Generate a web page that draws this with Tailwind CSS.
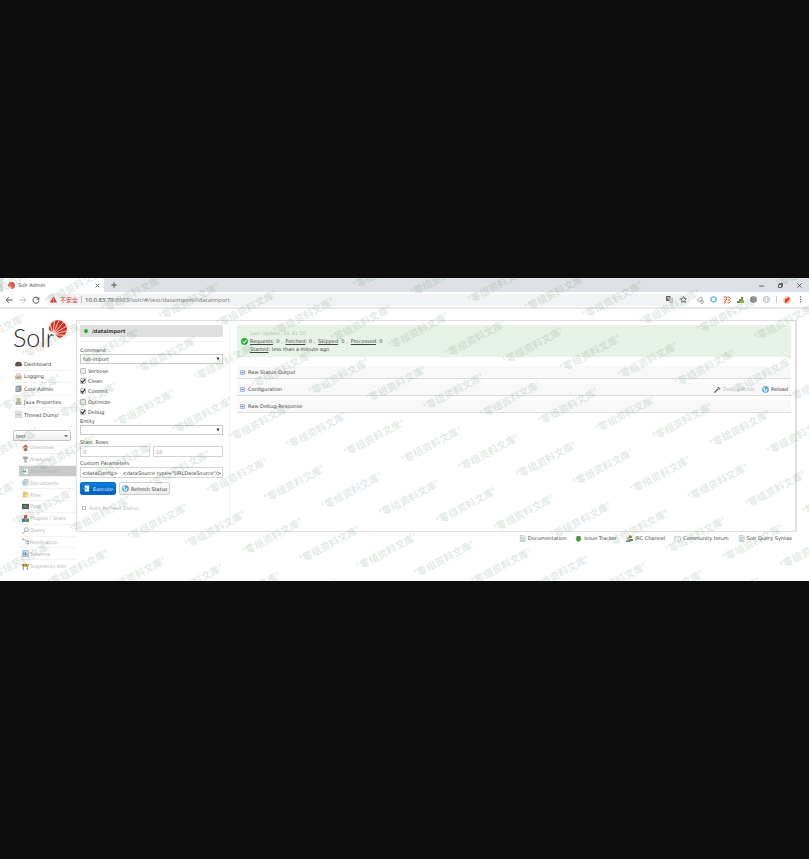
<!DOCTYPE html>
<html lang="en">
<head>
<meta charset="utf-8">
<title>Solr Admin</title>
<script src="https://cdn.jsdelivr.net/npm/@tailwindcss/browser@4"></script>
</head>
<body class="flex min-h-screen flex-col justify-center bg-[#0d0d0d]">
<svg class="hidden">
  <symbol id="sun" viewBox="0 0 18 18"><path d="M5 13.500L0 10A9.300 9.300 0 0 1 9 0A9 9 0 0 1 18 9A9.300 9.300 0 0 1 10 18z" fill="#d9301e"/><path d="M4 14.500L1 4M4 14.500L5.500 0M4 14.500L10.500 -1M4 14.500L15.500 1M4 14.500L18.500 5.500M4 14.500L19 10.500M4 14.500L17 15.500" stroke="#fff" stroke-width=".8"/></symbol>
  <symbol id="check" viewBox="0 0 8 8"><path d="M1.500 4L3.300 6L6.800 1.500" fill="none" stroke="#333" stroke-width="1.600"/></symbol>
  <symbol id="doc" viewBox="0 0 8 8"><path d="M1.500 .5h4l1.500 1.500v5.500h-5.500z" fill="#e9f0f2" stroke="#9fb4ba" stroke-width=".7"/><path d="M2.500 3h3M2.500 4.500h3M2.500 6h3" stroke="#8fb3b9" stroke-width=".6"/></symbol>
  <symbol id="reload" viewBox="0 0 8 8"><circle cx="4" cy="4" r="3.800" fill="#4a9fdc"/><path d="M2.500 2.500v2a1.500 1.500 0 0 0 3 0V3" fill="none" stroke="#fff" stroke-width="1.200"/><path d="M1 3.200L2.500 1 4 3.200z" fill="#fff"/></symbol>
  <symbol id="toggle" viewBox="0 0 6 6"><rect x=".5" y=".5" width="5" height="5" rx=".8" fill="#dfe6fb" stroke="#8796d8" stroke-width=".8"/><path d="M1.500 3h3" stroke="#4a5fc0" stroke-width=".9"/></symbol>
</svg>
<div class="relative overflow-hidden bg-white font-['DejaVu_Sans',sans-serif] text-[5px] leading-[8px] text-[#444]">

  <!-- Browser chrome -->
  <header class="border-b-2 border-[#e8e8e8] bg-white">
    <div class="flex h-[14px] items-end justify-between bg-[#dee1e6] pl-[3px]">
      <div class="flex items-end">
        <div class="flex h-[14px] w-[101px] items-center rounded-t-[3px] bg-white pl-[5px] pr-[4px]">
          <svg class="mr-[3px] size-[7px]"><use href="#sun"/></svg>
          <span>Solr Admin</span>
          <button class="ml-auto" aria-label="Close tab"><svg class="size-[5px]" viewBox="0 0 5 5"><path d="M.7.7l3.600 3.600M4.300.7L.7 4.300" stroke="#555" stroke-width=".9"/></svg></button>
        </div>
        <button class="mb-[4px] ml-[7px]" aria-label="New tab"><svg class="size-[6px]" viewBox="0 0 6 6"><path d="M3 .3v5.400M.3 3h5.400" stroke="#555" stroke-width="1"/></svg></button>
      </div>
      <div class="flex h-[13px] items-center gap-[14px] pr-[7px]">
        <button aria-label="Minimize"><svg class="size-[5px]" viewBox="0 0 5 5"><path d="M0 3h5" stroke="#444" stroke-width=".8"/></svg></button>
        <button aria-label="Restore"><svg class="size-[5px]" viewBox="0 0 5 5"><path d="M.5 1.500h3v3h-3zM1.500 1.500v-1h3v3h-1" fill="none" stroke="#444" stroke-width=".8"/></svg></button>
        <button aria-label="Close window"><svg class="size-[5px]" viewBox="0 0 5 5"><path d="M.4.4l4.200 4.200M4.600.4L.4 4.600" stroke="#444" stroke-width=".8"/></svg></button>
      </div>
    </div>
    <div class="flex h-[15px] items-center pl-[5px] pr-[7px]">
      <button class="mr-[6px]" aria-label="Back"><svg class="size-[8px]" viewBox="0 0 8 8"><path d="M7.500 4H1.500M4 1.200L1.200 4L4 6.800" fill="none" stroke="#555" stroke-width="1"/></svg></button>
      <button class="mr-[5px]" aria-label="Forward"><svg class="size-[8px]" viewBox="0 0 8 8"><path d="M.5 4h6M4 1.200L6.800 4L4 6.800" fill="none" stroke="#bbb" stroke-width="1"/></svg></button>
      <button class="mr-[6px]" aria-label="Reload page"><svg class="size-[8px]" viewBox="0 0 8 8"><path d="M6.500 2.500A3 3 0 1 0 7 4.600" fill="none" stroke="#555" stroke-width="1"/><path d="M7.300.7v3h-3z" fill="#555"/></svg></button>
      <div class="flex h-[12px] grow items-center rounded-full bg-[#f1f3f4] pl-[4px] pr-[3px] font-['Open_Sans','Noto_Sans_CJK_SC',sans-serif] text-[6px]">
        <svg class="mr-[3px] size-[7px]" viewBox="0 0 7 7"><path d="M3.500.5L7 6.500H0z" fill="#d93025"/><path d="M3.500 2.700v1.900M3.500 5.100v.8" stroke="#fff" stroke-width=".7"/></svg>
        <span class="text-[#d93025]">不安全</span>
        <span class="mx-[3px] h-[7px] w-px bg-[#bbb]"></span>
        <span class="grow text-[#777]"><span class="text-[#333]">10.0.83.79</span>:8983/solr/#/test/dataimport//dataimport</span>
        <div class="flex items-center gap-[7px]">
          <svg class="size-[7px]" viewBox="0 0 7 7"><rect width="4.500" height="5" fill="#666"/><path d="M3 2h4v5H4z" fill="#bbb"/><path d="M1.200 1.500h2M2.200 1.500v2M4.500 3.500l1.500 2.500" stroke="#fff" stroke-width=".6"/></svg>
          <svg class="size-[7px]" viewBox="0 0 7 7"><path d="M3.500.5l.9 2 2.200.2-1.700 1.500.5 2.200-1.900-1.100-1.900 1.100.5-2.200L.4 2.700l2.200-.2z" fill="none" stroke="#555" stroke-width=".8"/></svg>
        </div>
      </div>
      <div class="ml-[6px] flex items-center gap-[6px]">
        <svg class="size-[8px]" viewBox="0 0 8 8"><path d="M1 3.500L4 1.300 6.500 2v2L3 6z" fill="#eee" stroke="#aaa" stroke-width=".8"/><circle cx="6" cy="6" r="1.500" fill="#fff" stroke="#888" stroke-width=".7"/></svg>
        <svg class="size-[7px]" viewBox="0 0 7 7"><circle cx="3.500" cy="3.500" r="2.600" fill="none" stroke="#67b5ee" stroke-width="1.400"/></svg>
        <svg class="size-[8px]" viewBox="0 0 8 8"><path d="M.5 1h3v2.500L2 5v2H.5M2.500 3.500H1M4.500 1H6l1.300 1.200L6 3.800l1.500 1.500L6 7H4.500M4.500 3.800H6" fill="none" stroke="#e8622c" stroke-width="1"/></svg>
        <svg class="size-[7px]" viewBox="0 0 7 7"><path d="M0 7V5h2V3h2V1h2v6z" fill="#77827b"/><path d="M3 5l4-1v3H3z" fill="#8bbd2f"/></svg>
        <svg class="size-[7px]" viewBox="0 0 7 7"><circle cx="3.500" cy="3.500" r="3.300" fill="#777"/><path d="M1 3h5M1.500 5h4M2 1.500h3" stroke="#ccc" stroke-width=".6"/></svg>
        <svg class="size-[7px]" viewBox="0 0 7 7"><circle cx="3.500" cy="3.500" r="3" fill="#fff" stroke="#999" stroke-width=".8"/><path d="M2.700 2L2 3.500 2.700 5M4.300 2L5 3.500 4.300 5" fill="none" stroke="#999" stroke-width=".6"/></svg>
        <span class="h-[7px] w-px bg-[#ccc]"></span>
        <svg class="size-[8px]" viewBox="0 0 8 8"><circle cx="4" cy="4" r="4" fill="#f6d5c8"/><path d="M1.500 6.800L2.300 3 6.200 1l.5 2L4 6.500z" fill="#e2401b"/></svg>
        <svg class="ml-[2px] h-[7px] w-[3px]" viewBox="0 0 3 7"><g fill="#666"><circle cx="1.500" cy="1" r=".7"/><circle cx="1.500" cy="3.500" r=".7"/><circle cx="1.500" cy="6" r=".7"/></g></svg>
      </div>
    </div>
  </header>

  <div class="flex pb-[8px] pl-[13px] pr-[12px] pt-[11px]">
    <!-- Navigation -->
    <nav class="w-[63px] shrink-0">
      <a href="#" class="relative block h-[38px] pt-[2px] font-['Lato',sans-serif] text-[25px] font-light leading-[30px] text-[#2a2530]">Solr<svg class="absolute left-[36px] top-0 size-[18px]"><use href="#sun"/></svg></a>
      <ul class="grid h-[63px] grid-rows-5 divide-y divide-[#f2f2f2]">
        <li class="flex items-center"><a href="#" class="flex items-center gap-[2px] pl-[2px]"><svg class="size-[7px]" viewBox="0 0 8 8"><path d="M0 6a4 4 0 0 1 8 0l-1 1H1z" fill="#5b4a4a"/><path d="M4 6l2-2.500" stroke="#e55" stroke-width=".8"/></svg>Dashboard</a></li>
        <li class="flex items-center"><a href="#" class="flex items-center gap-[2px] pl-[2px]"><svg class="size-[7px]" viewBox="0 0 8 8"><path d="M1 3l1-2.500h4L7 3z" fill="#dceaf6" stroke="#8fb0cc" stroke-width=".5"/><path d="M0 3h8v4.500H0z" fill="#efbd7c"/><path d="M1.500 4.500h5v1.500h-5z" fill="#7aa6cf"/></svg>Logging</a></li>
        <li class="flex items-center"><a href="#" class="flex items-center gap-[2px] pl-[2px]"><svg class="size-[7px]" viewBox="0 0 8 8"><path d="M2.500.5h5v6l-2 1.500h-5V2z" fill="#8d979f"/><path d="M1.500 3h3M1.500 4.500h3M1.500 6h3" stroke="#e8eef2" stroke-width=".6"/></svg>Core Admin</a></li>
        <li class="flex items-center"><a href="#" class="flex items-center gap-[2px] pl-[2px]"><svg class="size-[7px]" viewBox="0 0 8 8"><path d="M1.500 0h5v8h-5z" fill="#c8d5d3"/><circle cx="4" cy="2" r="1.400" fill="#ddb565"/><path d="M1 4.500h6v3H1z" fill="#9aa989"/><path d="M2 6h4" stroke="#fff" stroke-width=".7"/></svg>Java Properties</a></li>
        <li class="flex items-center"><a href="#" class="flex items-center gap-[2px] pl-[2px]"><svg class="size-[7px]" viewBox="0 0 8 8"><path d="M.5.5h7v7h-7z" fill="#f3f3f3" stroke="#bbb" stroke-width=".7"/><path d="M1.500 2.500h5M1.500 4h5M1.500 5.500h5" stroke="#999" stroke-width=".6"/></svg>Thread Dump</a></li>
      </ul>
      <div class="relative mr-[5px] mt-[9px]">
        <select aria-label="Core" class="block h-[11px] w-full appearance-none rounded-[2px] border border-[#c4c4c4] bg-linear-to-b from-white to-[#eee] px-[2px] leading-[8px]"><option>test</option></select>
        <svg class="pointer-events-none absolute right-[3px] top-[4px] size-[4px]" viewBox="0 0 4 4"><path d="M0 1h4L2 3.500z" fill="#777"/></svg>
      </div>
      <ul class="mb-px ml-[6px] mt-px grid h-[130px] grid-rows-11 divide-y divide-[#f2f2f2] text-[#b4b4b4]">
        <li class="flex items-center pl-[3px]"><a href="#" class="flex items-center gap-px"><svg class="size-[7px]" viewBox="0 0 8 8"><path d="M0 4l4-3.500L8 4z" fill="#b9644a"/><path d="M1.500 4h5v4h-5z" fill="#d5b49a"/><path d="M3 5h2v3H3z" fill="#7a4a3a"/></svg>Overview</a></li>
        <li class="flex items-center pl-[3px]"><a href="#" class="flex items-center gap-px"><svg class="size-[7px]" viewBox="0 0 8 8"><path d="M1 .5h6v2L5 4.500V6.500h1v1H2v-1h1V4.500L1 2.500z" fill="#a5a9ad"/></svg>Analysis</a></li>
        <li class="flex items-center bg-[#c9c9c9] pl-[3px]"><a href="#" class="flex items-center gap-px"><svg class="size-[7px]" viewBox="0 0 8 8"><path d="M2 .5h5v7H2z" fill="#f6fafa" stroke="#9db0b0" stroke-width=".5"/><path d="M.5 4h4M3 2.500L4.700 4 3 5.500" fill="none" stroke="#45a06a" stroke-width="1"/></svg>Dataimport</a></li>
        <li class="flex items-center pl-[3px]"><a href="#" class="flex items-center gap-px"><svg class="size-[7px]" viewBox="0 0 8 8"><path d="M.5 2h4.500v5.500H.5z" fill="#b4cbd0"/><path d="M2.500.5h4.500v6H2.500z" fill="#dcebed" stroke="#7fa4ab" stroke-width=".6"/><path d="M3.500 2.500h2.500M3.500 4h2.500" stroke="#7fa4ab" stroke-width=".6"/></svg>Documents</a></li>
        <li class="flex items-center pl-[3px]"><a href="#" class="flex items-center gap-px"><svg class="size-[7px]" viewBox="0 0 8 8"><path d="M1 .5h3l.7 1.300H7V7.500H1z" fill="#eac766"/><path d="M4 4h4v4H4z" fill="#f5e4ac"/></svg>Files</a></li>
        <li class="flex items-center pl-[3px]"><a href="#" class="flex items-center gap-px"><svg class="size-[7px]" viewBox="0 0 8 8"><path d="M0 1h8v6H0z" fill="#4c5a60"/><path d="M1 4.500h1.500L3.500 2.500l1 3 .8-1H7" fill="none" stroke="#86c5a4" stroke-width=".6"/></svg>Ping</a></li>
        <li class="flex items-center pl-[3px]"><a href="#" class="flex items-center gap-px"><svg class="size-[7px]" viewBox="0 0 8 8"><path d="M2.200.2h3.500v3.800H2.200z" fill="#d3483d"/><path d="M0 4h4v4H0z" fill="#3f78bd"/><path d="M4 4h4v4H4z" fill="#4f9d45"/></svg>Plugins / Stats</a></li>
        <li class="flex items-center pl-[3px]"><a href="#" class="flex items-center gap-px"><svg class="size-[7px]" viewBox="0 0 8 8"><circle cx="5" cy="3" r="2.400" fill="#e2eef7" stroke="#8ea8bd" stroke-width=".8"/><path d="M3.300 4.700L.5 7.500" stroke="#a88f6b" stroke-width="1.100"/></svg>Query</a></li>
        <li class="flex items-center pl-[3px]"><a href="#" class="flex items-center gap-px"><svg class="size-[7px]" viewBox="0 0 8 8"><path d="M1.500 1.500h3v5H7M4.500 3.500H7" fill="none" stroke="#aaa" stroke-width=".7"/><path d="M0 .5h2v2H0zM6 2.500h2v2H6zM6 5.500h2v2H6z" fill="#a5a5a5"/></svg>Replication</a></li>
        <li class="flex items-center pl-[3px]"><a href="#" class="flex items-center gap-px"><svg class="size-[7px]" viewBox="0 0 8 8"><path d="M.5.5h7v7h-7z" fill="#cfe0ee" stroke="#86a9c7" stroke-width=".7"/><path d="M2 2v4M4 2v4.500M2.500 5h3.500" stroke="#5d89b0" stroke-width=".9"/></svg>Schema</a></li>
        <li class="flex items-center pl-[3px]"><a href="#" class="flex items-center gap-px"><svg class="size-[7px]" viewBox="0 0 8 8"><path d="M0 1h8v3H0z" fill="#d0a84a"/><path d="M1 1l1.500 3M4 1l1.500 3" stroke="#584a34" stroke-width=".9"/><path d="M1.500 4v4M6 4v4" stroke="#777" stroke-width="1"/></svg>Segments info</a></li>
      </ul>
    </nav>

    <div class="min-w-0 grow">
      <!-- Content panel -->
      <main class="flex h-[212px] border border-r-2 border-[#e0e0e0]">
        <form class="my-[4px] w-[153px] shrink-0 border-r border-[#f4f4f4] pl-[3px] pr-[6px]">
          <h2 class="flex h-[12px] items-center gap-[4px] bg-[#e0e0e0] pl-[4px] text-[5px] font-bold text-[#333]"><svg class="size-[4px]" viewBox="0 0 4 4"><circle cx="2" cy="2" r="2" fill="#1fb02e"/></svg>/dataimport</h2>
          <div class="mb-[4px] mt-[4px] h-px bg-[#f2f2f2]"></div>
          <label for="command" class="block">Command</label>
          <div class="relative">
            <select id="command" class="block h-[10px] w-full appearance-none border border-[#c8c8c8] bg-white px-[2px] leading-[8px]"><option>full-import</option></select>
            <svg class="pointer-events-none absolute right-[3px] top-[3px] size-[4px]" viewBox="0 0 4 4"><path d="M.5.5h3L2 3.500z" fill="#333"/></svg>
          </div>
          <div class="mt-[2px] grid h-[51px] grid-rows-5">
            <label class="flex items-center gap-[2px]"><span class="relative flex"><input type="checkbox" class="peer size-[6px] appearance-none rounded-[1px] border border-[#bbb] bg-[#eee]"><svg class="pointer-events-none absolute hidden size-[6px] peer-checked:block"><use href="#check"/></svg></span>Verbose</label>
            <label class="flex items-center gap-[2px]"><span class="relative flex"><input type="checkbox" checked class="peer size-[6px] appearance-none rounded-[1px] border border-[#bbb] bg-[#eee]"><svg class="pointer-events-none absolute hidden size-[6px] peer-checked:block"><use href="#check"/></svg></span>Clean</label>
            <label class="flex items-center gap-[2px]"><span class="relative flex"><input type="checkbox" checked class="peer size-[6px] appearance-none rounded-[1px] border border-[#bbb] bg-[#eee]"><svg class="pointer-events-none absolute hidden size-[6px] peer-checked:block"><use href="#check"/></svg></span>Commit</label>
            <label class="flex items-center gap-[2px]"><span class="relative flex"><input type="checkbox" class="peer size-[6px] appearance-none rounded-[1px] border border-[#bbb] bg-[#eee]"><svg class="pointer-events-none absolute hidden size-[6px] peer-checked:block"><use href="#check"/></svg></span>Optimize</label>
            <label class="flex items-center gap-[2px]"><span class="relative flex"><input type="checkbox" checked class="peer size-[6px] appearance-none rounded-[1px] border border-[#bbb] bg-[#eee]"><svg class="pointer-events-none absolute hidden size-[6px] peer-checked:block"><use href="#check"/></svg></span>Debug</label>
          </div>
          <label for="entity" class="block">Entity</label>
          <div class="relative">
            <select id="entity" class="block h-[10px] w-full appearance-none border border-[#c8c8c8] bg-white px-[2px] leading-[8px]"><option></option></select>
            <svg class="pointer-events-none absolute right-[3px] top-[3px] size-[4px]" viewBox="0 0 4 4"><path d="M.5.5h3L2 3.500z" fill="#333"/></svg>
          </div>
          <label for="start" class="mt-[3px] block">Start, Rows</label>
          <div class="grid grid-cols-2 gap-[3px]">
            <input id="start" value="0" class="h-[11px] min-w-0 border border-[#d4d4d4] px-[2px] text-[#999]">
            <input aria-label="Rows" value="10" class="h-[11px] min-w-0 border border-[#d4d4d4] px-[2px] text-[#999]">
          </div>
          <label for="custom" class="mt-[2px] block">Custom Parameters</label>
          <input id="custom" value='&lt;dataConfig&gt;   &lt;dataSource type="URLDataSource"/&gt;' class="block h-[11px] w-full border border-[#d4d4d4] px-px">
          <div class="mt-[4px] flex gap-[3px]">
            <button type="button" class="flex h-[13px] items-center gap-[3px] rounded-[2px] border border-[#0070c8] bg-linear-to-b from-[#0b7fdc] to-[#005cc0] px-[2px] text-[#e4f1ff]"><svg class="size-[7px]" viewBox="0 0 8 8"><path d="M2 .5h5v7H2z" fill="#fff"/><path d="M.5 4h4M3 2.500L4.700 4 3 5.500" fill="none" stroke="#6aa9e0" stroke-width="1"/></svg>Execute</button>
            <button type="button" class="flex h-[13px] items-center gap-[2px] rounded-[2px] border border-[#d0d0d0] bg-linear-to-b from-white to-[#ebebeb] px-[2px]"><svg class="size-[7px]"><use href="#reload"/></svg>Refresh Status</button>
          </div>
          <label class="mt-[9px] flex items-center gap-[3px] pl-[2px] text-[#bbb]"><input type="checkbox" class="size-[4px] appearance-none border border-[#bbb]">Auto-Refresh Status</label>
        </form>

        <section class="min-w-0 grow pl-[7px] pr-[4px] pt-[4px]">
          <div class="flex h-[32px] items-center bg-[#e6f3e6] pl-[4px]">
            <svg class="mr-[2px] size-[7px]" viewBox="0 0 8 8"><circle cx="4" cy="4" r="3.900" fill="#25ae31"/><path d="M2 4l1.500 1.700L6.200 2.500" fill="none" stroke="#fff" stroke-width="1.200"/></svg>
            <div>
              <p class="text-[#b4bfb4]">Last Update: 11:41:10</p>
              <p class="flex gap-[3px]"><span><span class="underline">Requests</span>: 0 ,</span><span><span class="underline">Fetched</span>: 0 ,</span><span><span class="underline">Skipped</span>: 0 ,</span><span><span class="underline">Processed</span>: 0</span></p>
              <p><span class="underline">Started</span>: less than a minute ago</p>
            </div>
          </div>
          <div class="mt-[9px] flex flex-col gap-[4px]">
            <div class="flex h-[13px] items-center border-b border-[#ddd] bg-[#f8f8f8] pl-[3px]"><a href="#" class="flex items-center gap-[3px]"><svg class="size-[5px]"><use href="#toggle"/></svg>Raw Status-Output</a></div>
            <div class="flex h-[13px] items-center border-b border-[#ddd] bg-[#f8f8f8] pl-[3px] pr-[3px]"><a href="#" class="flex items-center gap-[3px]"><svg class="size-[5px]"><use href="#toggle"/></svg>Configuration</a>
              <a href="#" class="ml-auto flex items-center gap-[2px] text-[#bbb]"><svg class="size-[7px]" viewBox="0 0 8 8"><path d="M.5 7.500L5 3" stroke="#444" stroke-width="1.200"/><path d="M3 1.500L5 .8 7.500 3 6.500 4.500 5.500 3z" fill="#777"/></svg>Debug-Mode</a>
              <a href="#" class="ml-[7px] flex items-center gap-[2px]"><svg class="size-[7px]"><use href="#reload"/></svg>Reload</a>
            </div>
            <div class="flex h-[13px] items-center border-b border-[#ddd] bg-[#f8f8f8] pl-[3px]"><a href="#" class="flex items-center gap-[3px]"><svg class="size-[5px]"><use href="#toggle"/></svg>Raw Debug-Response</a></div>
          </div>
        </section>
      </main>

      <footer class="mt-[2px] flex justify-end gap-[9px] pr-[5px]">
        <a href="#" class="flex items-center gap-[2px]"><svg class="size-[7px]"><use href="#doc"/></svg>Documentation</a>
        <a href="#" class="flex items-center gap-[2px]"><svg class="size-[7px]" viewBox="0 0 8 8"><path d="M1 1.500l6 5M7 1.500l-6 5M.5 4h7" stroke="#6a946b" stroke-width=".7"/><ellipse cx="4" cy="4.200" rx="2.500" ry="3.300" fill="#3f9343"/></svg>Issue Tracker</a>
        <a href="#" class="flex items-center gap-[2px]"><svg class="size-[7px]" viewBox="0 0 8 8"><circle cx="5" cy="2" r="1.800" fill="#a8673c"/><path d="M3 4.500h5V7H3z" fill="#4f9a54"/><circle cx="2.500" cy="4" r="1.500" fill="#d8a677"/><path d="M0 6h5v2H0z" fill="#5c8cc4"/></svg>IRC Channel</a>
        <a href="#" class="flex items-center gap-[2px]"><svg class="size-[7px]" viewBox="0 0 8 8"><path d="M.5 1.500h7v5.500h-7z" fill="#f3f7f7" stroke="#aebfc2" stroke-width=".7"/><path d="M.5 1.500L4 4.500l3.500-3" fill="none" stroke="#aebfc2" stroke-width=".7"/></svg>Community forum</a>
        <a href="#" class="flex items-center gap-[2px]"><svg class="size-[7px]"><use href="#doc"/></svg>Solr Query Syntax</a>
      </footer>
    </div>
  </div>

  <!-- Repeating diagonal watermark -->
  <svg id="watermark" aria-hidden="true" class="pointer-events-none absolute inset-0 size-full fill-[#4f8058]/18 font-['Noto_Sans_CJK_SC',sans-serif] text-[10px] font-bold"></svg>
</div>
<script>
  const layer = document.getElementById('watermark');
  const width = window.innerWidth;
  const height = layer.parentElement.offsetHeight;
  for (let row = -6; row < 9; row++) {
    for (let col = -12; col < 22; col++) {
      const x = 289 + col * 57.3 - row * 22.2;
      const y = 171 + col * 7.4 + row * 53.3;
      if (x < -50 || x > width - 4 || y < 4 || y > height + 28) continue;
      const t = document.createElementNS('http://www.w3.org/2000/svg', 'text');
      t.setAttribute('transform', `translate(${x} ${y}) rotate(-28)`);
      t.textContent = "'零组资料文库'";
      layer.appendChild(t);
    }
  }
</script>
</body>
</html>
